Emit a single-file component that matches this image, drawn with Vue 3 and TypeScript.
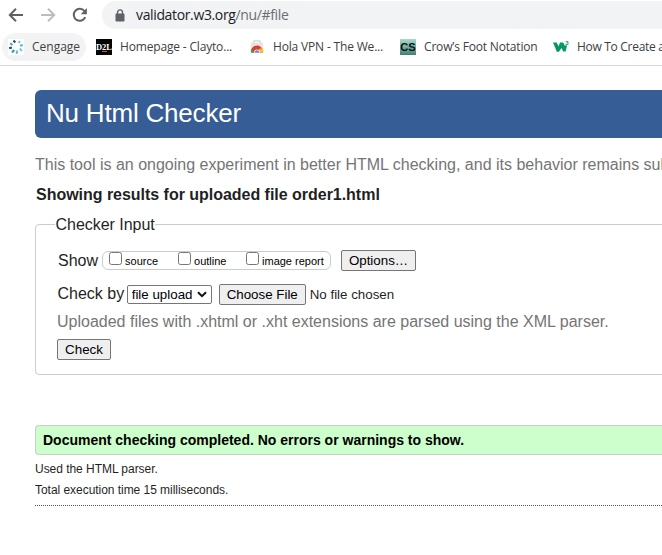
<script setup lang="ts">
import { ref } from 'vue'

interface Bookmark { id: string; label: string }
interface ShowOption { id: string; label: string }

const bookmarks: Bookmark[] = [
  { id: 'cengage', label: 'Cengage' },
  { id: 'd2l', label: 'Homepage - Clayto...' },
  { id: 'hola', label: 'Hola VPN - The We...' },
  { id: 'crow', label: 'Crow’s Foot Notation' },
  { id: 'w3', label: 'How To Create a' },
]

const showOptions: ShowOption[] = [
  { id: 'source', label: 'source' },
  { id: 'outline', label: 'outline' },
  { id: 'image', label: 'image report' },
]

const checked = ref<string[]>([])
const method = ref('file')
</script>

<template>
  <div class="window">
    <header class="toolbar">
      <svg class="nav" viewBox="0 0 16 16"><path d="M15 8H2.2M8 1.8 1.8 8 8 14.2" /></svg>
      <svg class="nav forward" viewBox="0 0 16 16"><path d="M1 8h12.8M8 1.8 14.2 8 8 14.2" /></svg>
      <svg class="nav reload" viewBox="0 0 16 16"><path d="M13.3 10.2A6 6 0 1 1 12.5 4.1L13.5 5.2" /><path class="solid" d="M14.9 1v6.2H8.7z" /></svg>
      <div class="address">
        <svg class="lock" viewBox="0 0 10 13"><path d="M2.5 6V3.4a2.5 2.5 0 0 1 5 0V6" fill="none" stroke="#5f6368" stroke-width="1.4" /><rect x="0.5" y="4.5" width="9" height="8" rx="1" fill="#5f6368" /></svg>
        <span class="url">validator.w3.org<span class="path">/nu/#file</span></span>
      </div>
    </header>

    <nav class="bookmarks">
      <a v-for="b in bookmarks" :key="b.id" class="bookmark" :class="b.id">
        <svg v-if="b.id === 'cengage'" class="favicon" viewBox="0 0 16 16">
          <rect width="16" height="16" fill="#fff" />
          <g fill="none" stroke-width="2">
            <path d="M5.5 1.5 7.3 3.5" stroke="#174b78" />
            <path d="M10.5 3.8 12 2.2" stroke="#74bce0" />
            <path d="M12 6.8 14.8 6" stroke="#5db5df" />
            <path d="M11.7 9.5 13.8 12" stroke="#75c9ed" />
            <path d="M9 11.5 8.7 14.8" stroke="#64b5e0" />
            <path d="M6.2 11 4 13.5" stroke="#3c8fbd" />
            <path d="M4 8.7 1 9" stroke="#1b5888" />
            <path d="M4.5 6 2.3 4.2" stroke="#4a9ecb" />
          </g>
        </svg>
        <svg v-else-if="b.id === 'd2l'" class="favicon" viewBox="0 0 16 16">
          <rect width="16" height="16" fill="#050505" />
          <text x="0" y="11" textLength="16" lengthAdjust="spacingAndGlyphs" class="d2l-text">D2L</text>
          <path d="M6 12.5h5" stroke="#d55a29" stroke-width="1" />
        </svg>
        <svg v-else-if="b.id === 'hola'" class="favicon" viewBox="0 0 16 16">
          <path d="M5 4V1.8h6V4" fill="none" stroke="#d4d4d4" stroke-width="1.3" />
          <path d="M2 3.5h12l.7 10H1.3z" fill="#e5e5e5" />
          <path d="M2 13.5C1.7 4 14.3 4 14 13.5z" fill="#e33b2e" />
          <path d="m2.2 9.4 3.5 4.1H2z" fill="#30a852" />
          <path d="M10.5 9.5h3.1q.7 2 .4 4h-4z" fill="#fbc116" />
          <path d="M5 13.5a3 3 0 0 1 6 0z" fill="#fff" />
          <path d="M5.8 13.5a2.2 2.2 0 0 1 4.4 0z" fill="#4285f4" />
        </svg>
        <svg v-else-if="b.id === 'crow'" class="favicon" viewBox="0 0 16 16">
          <defs><linearGradient id="mint" x2="0" y2="1"><stop stop-color="#a8dbc9" /><stop offset="1" stop-color="#448078" /></linearGradient></defs>
          <rect width="16" height="16" fill="url(#mint)" />
          <text x="0.3" y="12" textLength="15.4" lengthAdjust="spacingAndGlyphs" class="cs-text">CS</text>
        </svg>
        <svg v-else class="favicon" viewBox="0 0 16 16">
          <path d="M0 3.5h3.6l2 3.7 1.4-3.7h3.2l1.8 3.4 1-1.4.9 1.8-1.3 5.2h-2.4L8.5 9l-2.6 3.8H3.8z" fill="#059862" />
          <text x="12.3" y="6" class="w3-text">3</text>
        </svg>
        <span class="label">{{ b.label }}</span>
      </a>
    </nav>

    <main class="page">
      <h1>Nu Html Checker</h1>
      <p class="intro">This tool is an ongoing experiment in better HTML checking, and its behavior remains subject to change</p>
      <h2>Showing results for uploaded file order1.html</h2>

      <fieldset class="input">
        <legend>Checker Input</legend>
        <div class="row show">
          <span class="caption">Show</span>
          <div class="options">
            <label v-for="o in showOptions" :key="o.id" :class="o.id">
              <input v-model="checked" type="checkbox" :value="o.id"><span>{{ o.label }}</span>
            </label>
          </div>
          <button type="button" class="more">Options…</button>
        </div>
        <div class="row by">
          <span class="caption">Check by</span>
          <div class="picker">
            <select v-model="method">
              <option value="file">file upload</option>
              <option value="address">address</option>
              <option value="text">text input</option>
            </select>
            <svg class="chevron" viewBox="0 0 10 7"><path d="m1 1.2 4 4 4-4" /></svg>
          </div>
          <button type="button" class="choose">Choose File</button>
          <span class="nofile">No file chosen</span>
        </div>
        <p class="hint">Uploaded files with .xhtml or .xht extensions are parsed using the XML parser.</p>
        <button type="button" class="check">Check</button>
      </fieldset>

      <p class="success">Document checking completed. No errors or warnings to show.</p>
      <p class="detail">Used the HTML parser.</p>
      <p class="detail">Total execution time 15 milliseconds.</p>
      <hr>
    </main>
  </div>
</template>

<style>
body { margin: 0; overflow: hidden; background: #fff; }
</style>

<style scoped>
* { box-sizing: border-box; }
.window { width: 100%; height: 555px; overflow: hidden; font-family: "Liberation Sans", Arial, sans-serif; font-size: 16px; color: #1f1f25; }
.toolbar { display: flex; align-items: center; height: 30px; padding-left: 8px; }
.nav { width: 16px; height: 16px; margin-right: 16px; flex: none; fill: none; stroke: #5f6368; stroke-width: 2; }
.nav.forward { stroke: #bbbdbf; }
.nav.reload { margin-right: 14px; }
.nav .solid { fill: #5f6368; stroke: none; }
.address { display: flex; align-items: center; flex: 1; height: 28px; padding-left: 13px; border-radius: 14px 0 0 14px; background: #f1f3f4; }
.lock { width: 10px; height: 13px; margin-right: 11px; }
.url { font: 14px/20px "Open Sans", sans-serif; color: #202124; white-space: nowrap; letter-spacing: -.36px; }
.path { color: #6b6e72; }
.bookmarks { display: flex; align-items: center; height: 36px; padding: 1px 0 2px 2px; border-bottom: 1px solid #d5d7da; overflow: hidden; }
.bookmark { display: flex; align-items: center; flex: none; height: 28px; padding-left: 10px; white-space: nowrap; }
.bookmark.cengage { width: 84px; padding-left: 6px; background: #f3f3f4; border-radius: 14px; }
.bookmark.d2l { width: 153px; }
.bookmark.hola { width: 151px; }
.bookmark.crow { width: 153px; }
.favicon { width: 16px; height: 16px; margin-right: 8px; flex: none; }
.d2l-text { font: bold 9px "Liberation Serif", serif; fill: #fff; }
.cs-text { font: bold 11px "Liberation Sans", sans-serif; fill: #071512; }
.w3-text { font: bold 6px "Liberation Sans", sans-serif; fill: #059862; }
.label { font: 12px/16px "Open Sans", sans-serif; color: #3c4043; letter-spacing: -.17px; }
.cengage .label { letter-spacing: 0; }
.w3 .label { letter-spacing: -.3px; }
.page { padding: 24px 0 0 35px; }
h1 { margin: 0; height: 48px; padding-left: 11px; border-radius: 6px 0 0 6px; background: #365d95; color: #fff; font-size: 26px; font-weight: 400; line-height: 46px; letter-spacing: -.2px; }
p { margin: 0; white-space: nowrap; }
.intro { margin-top: 17px; line-height: 20px; color: #757575; }
h2 { margin: 10px 0 0 1px; font-size: 16px; line-height: 20px; letter-spacing: -.025px; }
.input { width: 700px; height: 161px; margin: 9px 0 0; padding: 16px 0 0 21px; border: 1px solid #ccc; border-radius: 4px; }
legend { height: 20px; margin-left: -2px; padding: 0 0 0 .5px; line-height: 22px; letter-spacing: -.03px; }
.row { display: flex; align-items: center; }
.show { height: 21px; }
.caption { height: 20px; line-height: 18px; white-space: nowrap; }
.show .caption { padding-left: 1px; margin-right: -1px; line-height: 20px; }
.by .caption { padding-left: .5px; margin-right: -.5px; }
.options { display: flex; width: 229px; height: 19px; margin-left: 5px; border: 1px solid #ccc; border-radius: 6px; }
label { display: flex; align-items: flex-start; height: 17px; margin-left: 6px; font-size: 11px; line-height: 19px; white-space: nowrap; color: #000; }
label.source { width: 63px; }
label.outline { width: 62px; }
label input { appearance: none; flex: none; width: 13px; height: 13px; margin: 0 3px 0 0; border: 1px solid #767676; border-radius: 2.5px; background: #fff; }
button { height: 21px; padding: 0; border: 1px solid #767676; border-radius: 2px; background: #efefef; color: #000; font: 13.333px/19px "Liberation Sans", Arial, sans-serif; }
.more { width: 75px; margin-left: 10px; }
.by { height: 21px; margin-top: 13px; }
.picker { display: flex; align-items: center; width: 85px; height: 19px; margin-left: 3px; padding: 0 4px; border: 1px solid #767676; border-radius: 2px; }
select { appearance: none; flex: 1; min-width: 0; height: 17px; padding: 0; border: 0; background: transparent; color: #000; font: 13.333px/17px "Liberation Sans", Arial, sans-serif; }
.chevron { width: 10px; height: 7px; flex: none; fill: none; stroke: #111; stroke-width: 2; }
.choose { width: 87px; margin-left: 7px; }
.nofile { margin-left: 4px; font-size: 13.333px; white-space: nowrap; }
.hint { margin-top: 7px; line-height: 20px; color: #757575; }
.check { display: block; width: 54px; margin-top: 7px; }
.success { height: 30px; margin-top: 50px; padding-left: 7px; border: 1px solid #ccc; border-right: 0; border-radius: 4px 0 0 4px; background: #cfc; color: #000; font-size: 14px; font-weight: 700; line-height: 28px; }
.detail { margin-top: 5px; font-size: 12px; line-height: 16px; letter-spacing: -.04px; }
.success + .detail { margin-top: 6px; }
hr { margin: 7px 0 0; border: 0; border-top: 1px dotted #555; }
</style>
